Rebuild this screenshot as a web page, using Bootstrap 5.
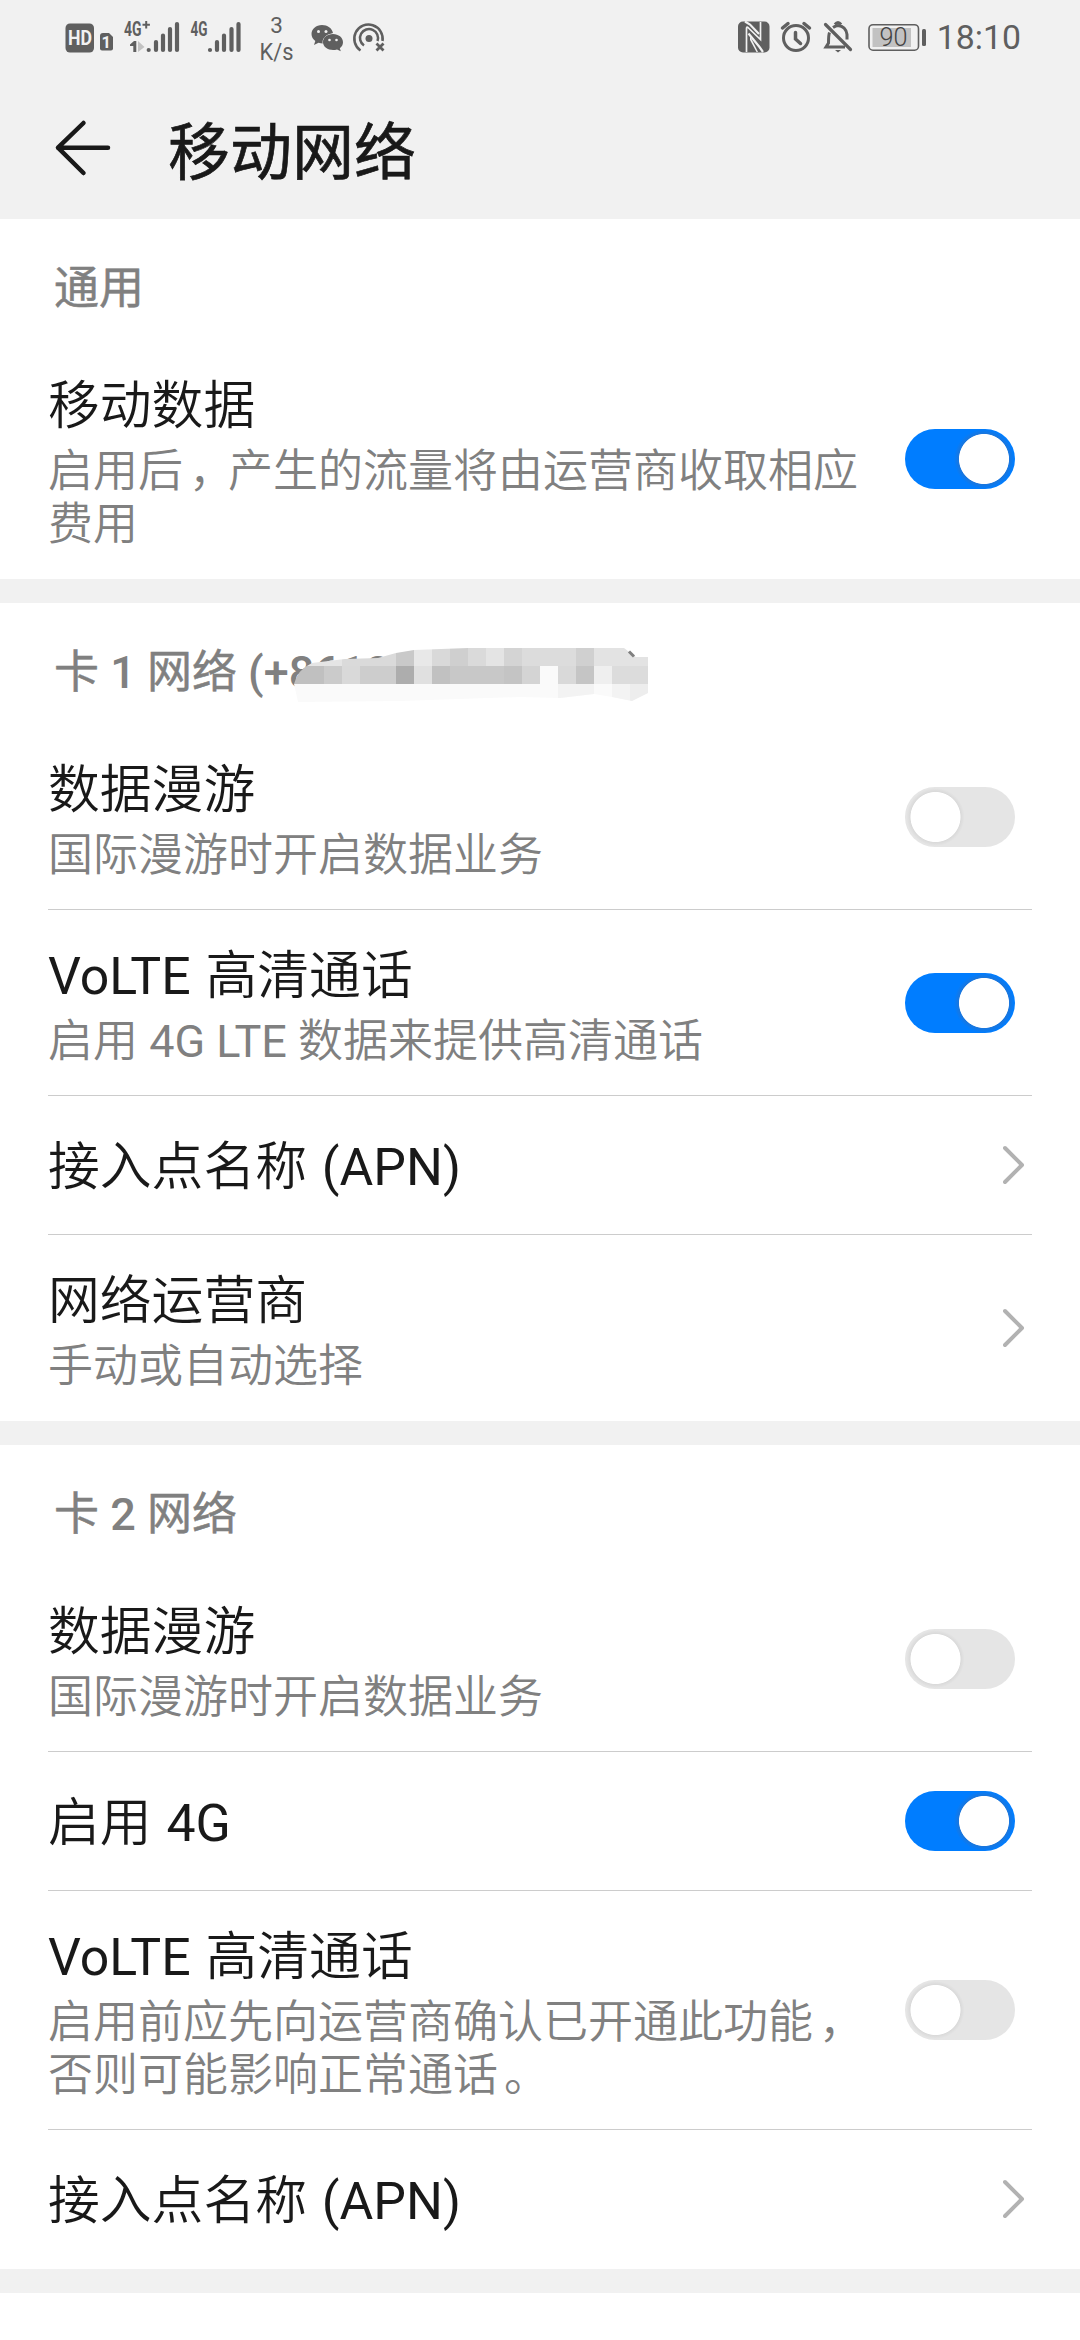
<!DOCTYPE html>
<html lang="zh-CN">
<head>
<meta charset="utf-8">
<meta name="viewport" content="width=device-width, initial-scale=1">
<title>移动网络</title>
<link href="https://cdn.jsdelivr.net/npm/bootstrap@5.3.0/dist/css/bootstrap.min.css" rel="stylesheet">
<style>
body{font-family:Roboto,"Noto Sans CJK SC DemiLight","Noto Sans CJK SC",sans-serif;background:#fff;color:#191919;overflow:hidden}
.statusbar{height:76px;padding:0 59px 0 64px;color:#5f5f5f}
.topbar{height:219px;background:#f1f1f1}
.titlebar{height:143px;padding-left:54px}
.page-title{font-family:"Noto Sans CJK SC",sans-serif;font-size:62px;line-height:80px;font-weight:400;-webkit-text-stroke:.7px #191919;margin:0 0 0 56px;padding-top:1px}
.band{height:24px;background:#f1f1f1}
.sec-head{height:121px;padding:43px 54px 0;font-family:Roboto,"Noto Sans CJK SC",sans-serif;font-size:45px;line-height:53px;font-weight:400;-webkit-text-stroke:.5px #808080;color:#808080}
.sec-head b{font-weight:500;-webkit-text-stroke:0}
.mosaic{left:288px;top:37px}
.rows{padding:0 48px}
.setting{border-bottom:1px solid #ccc;min-height:139px;padding-right:17px}
.setting.nav-row{padding-right:7px}
.setting:last-child{border-color:transparent}
.two{padding:36px 0 27px}
.one{padding-top:5px}
.t-main{font-size:51.8px;line-height:61px;word-spacing:2px}
.t-sub{font-size:45px;line-height:53px;margin-top:8px;color:#808080;width:830px}
.punct{padding-left:6px;margin-right:-6px}
.form-switch.sw{padding:0;min-height:0;margin:0}
.form-switch.sw .form-check-input{width:110px;height:60px;margin:0;border:0;background-color:#e5e5e5;float:none;border-radius:30px;display:block;background-size:auto;background-position:0 0;
background-image:radial-gradient(circle at 30.5px 30px,#fff 24.6px,#dadada 25.4px,#e5e5e500 29px)}
.form-switch.sw .form-check-input:checked{background-color:#007dff;
background-image:radial-gradient(circle at 79px 30px,#fff 24.6px,#1a76dd 25.4px,#1a76dd00 30px)}
.clock{font-size:33.8px;line-height:40px;margin-left:6px}
</style>
</head>
<body>
<header class="topbar">
<div class="statusbar d-flex align-items-center justify-content-between">
<div class="d-flex align-items-center">
<svg width="330" height="76" viewBox="64 0 330 76" fill="#5f5f5f" font-family="Roboto">
<rect x="65.500" y="23.500" width="28.500" height="29" rx="4.500"/>
<text x="68" y="45" font-size="19.500" font-weight="700" fill="#f1f1f1" textLength="24" lengthAdjust="spacingAndGlyphs">HD</text>
<path d="M103 33h6l4 4v11.500q0 2-2 2h-9q-2 0-2-2V36q0-3 3-3z"/>
<text x="101.500" y="48" font-size="16.500" font-weight="700" fill="#f1f1f1">1</text>
<text x="124" y="35.500" font-size="20" font-weight="700" textLength="17.500" lengthAdjust="spacingAndGlyphs">4G</text>
<path d="M142.500 23.700h2.700v-2.700h2v2.700h2.700v2h-2.700v2.700h-2v-2.700h-2.700z"/>
<path d="M130 44.500l4-3.500h2.300V52h-3V46h-3.300z"/><path d="M138 41v11l6.500-5z" fill="#c2c2c2"/>
<g stroke="#5f5f5f" stroke-width="4.200" stroke-linecap="round"><path d="M148.700 50v0M156 42v8M163 35.500V50M170 29v21M177 24v26"/><path d="M210 50v0M217 42v8M224 35.500V50M231.500 29v21M238.500 24v26"/></g>
<text x="190.500" y="35.500" font-size="20" font-weight="700" textLength="17" lengthAdjust="spacingAndGlyphs">4G</text>
<text x="276.500" y="32.500" font-size="22.500" text-anchor="middle">3</text>
<text x="276.500" y="60" font-size="23" text-anchor="middle" textLength="34" lengthAdjust="spacingAndGlyphs">K/s</text>
<path d="M322 25c-6 0-10.500 4-10.500 9 0 3 1.500 5.300 3.800 7l-1.300 4 4.500-2.300q4 1.200 7.500.3A9.500 9.500 0 0 1 333 33C332 28 327.500 25 322 25z"/>
<path d="M333 34c5.500 0 10 3.600 10 8.200 0 2.500-1.300 4.600-3.200 6l1 3-3.800-1.800c-7 2-14-1.700-14-7.200 0-4.600 4.500-8.200 10-8.200z" stroke="#f1f1f1" stroke-width="1" paint-order="stroke"/>
<g fill="#f1f1f1"><circle cx="318.500" cy="31.500" r="1.500"/><circle cx="326" cy="31.500" r="1.500"/><circle cx="329.500" cy="40" r="1.300"/><circle cx="336.500" cy="40" r="1.300"/></g>
<g fill="none" stroke="#5f5f5f" stroke-width="2.500"><path d="M360.500 50.500A14.200 14.200 0 1 1 382.500 41"/><path d="M364 45.500A9 9 0 1 1 377.500 41"/><path d="M376.500 43.500l7 7M383.500 43.500l-7 7" stroke-width="2.800"/></g><circle cx="369" cy="38.500" r="3.500"/>
</svg>
</div>
<div class="d-flex align-items-center">
<svg width="196" height="76" viewBox="735 0 196 76" fill="none" stroke="#5f5f5f" stroke-width="3">
<rect x="738" y="21.500" width="31.500" height="31" rx="5" fill="#5f5f5f" stroke="none"/>
<path d="M746.500 52V28.500q0-2.500 2-.5l12 11.500V22" stroke="#f1f1f1" stroke-width="1.700"/><path d="M745 21.500l5 3 9 9.500M748.500 33.500l11 13.500 3.500 5" stroke="#f1f1f1" stroke-width="2.200"/><path d="M750 36v16h8z" fill="#f1f1f1" stroke="none"/><path d="M749.500 39v13h7z" fill="#5f5f5f" stroke="none"/>
<circle cx="796" cy="38" r="12.500"/><path d="M795.500 32.500V39l5 4.500M782.500 28l5.500-4.500M809.500 28l-5.500-4.500" stroke-linecap="round" stroke-width="3.500"/>
<path d="M825.500 24.500l25 25" stroke-width="3.200" stroke-linecap="round"/><path d="M829.500 32.500Q828.500 35 828.500 43L826 47h19M833 27.500q3-2 5-2 8 1 9 9v5"/><path d="M835 24.500q3-4 6 0"/><path d="M835 50h6l-3 2.500z" fill="#5f5f5f" stroke="none"/>
<rect x="869" y="24.700" width="49.500" height="25.500" rx="4" stroke-width="1.600"/><rect x="872.500" y="28" width="38.500" height="19" fill="#c2c2c2" stroke="none"/><rect x="922" y="29" width="4" height="17" rx="1.500" fill="#5f5f5f" stroke="none"/>
<text x="879.500" y="45.800" font-size="25.500" font-family="Roboto" font-weight="300" fill="#444" stroke="none" textLength="28" lengthAdjust="spacingAndGlyphs">90</text>
</svg>
<span class="clock">18:10</span>
</div>
</div>
<div class="titlebar d-flex align-items-center">
<svg width="58" height="58" viewBox="54 118 58 58" fill="none" stroke="#191919" stroke-width="4.500" stroke-linecap="round" stroke-linejoin="round"><path d="M108 146.700H58M83.500 122L58 146.700 83.500 172"/></svg>
<h1 class="page-title">移动网络</h1>
</div>
</header>
<main>
<section>
<div class="sec-head">通用</div>
<div class="rows">
<div class="setting d-flex align-items-center justify-content-between"><div class="two"><div class="t-main">移动数据</div><div class="t-sub">启用后<span class="punct">，</span>产生的流量将由运营商收取相应费用</div></div><div class="form-check form-switch sw"><input class="form-check-input" type="checkbox" checked></div></div>
</div>
</section>
<div class="band"></div>
<section>
<div class="sec-head position-relative">卡 <b>1</b> 网络 <b>(+8618</b>
<svg class="mosaic position-absolute" width="364" height="70" viewBox="288 640 364 70" shape-rendering="crispEdges">
<clipPath id="smear"><path d="M294 684Q297 670 312 663L345 659 378 658 396 653 414 650 468 648H624L636 657H648V693L632 701 612 697 594 694 560 698 520 697 400 701 298 702z"/></clipPath>
<g clip-path="url(#smear)">
<path fill="#fafafa" d="M288 684h360v20H288z"/><path fill="#f3f3f3" d="M558 684h36v20h-36zM612 684h18v20h-18z"/><path fill="#ededed" d="M630 684h18v20h-18z"/>
<path fill="#e5e5e5" d="M288 646h54v20h-54z"/><path fill="#dadada" d="M342 646h54v20h-54z"/><path fill="#c9c9c9" d="M396 646h18v20h-18z"/><path fill="#e8e8e8" d="M414 646h18v20h-18z"/><path fill="#d9d9d9" d="M432 646h18v20h-18z"/><path fill="#cfcfcf" d="M450 646h18v20h-18z"/><path fill="#dadada" d="M468 646h18v20h-18z"/><path fill="#e4e4e4" d="M486 646h18v20h-18z"/><path fill="#d4d4d4" d="M504 646h18v20h-18z"/><path fill="#dcdcdc" d="M522 646h54v20h-54z"/><path fill="#d0d0d0" d="M576 646h18v20h-18z"/><path fill="#e3e3e3" d="M594 646h54v20h-54z"/>
<path fill="#c0c0c0" d="M288 666h36v18h-36z"/><path fill="#cbcbcb" d="M324 666h18v18h-18z"/><path fill="#d9d9d9" d="M342 666h18v18h-18z"/><path fill="#cdcdcd" d="M360 666h36v18h-36z"/><path fill="#adadad" d="M396 666h18v18h-18z"/><path fill="#e0e0e0" d="M414 666h18v18h-18z"/><path fill="#c1c1c1" d="M432 666h18v18h-18z"/><path fill="#c8c8c8" d="M450 666h54v18h-54z"/><path fill="#c4c4c4" d="M504 666h18v18h-18z"/><path fill="#d4d4d4" d="M522 666h18v18h-18z"/><path fill="#fafafa" d="M540 666h18v18h-18z"/><path fill="#d9d9d9" d="M558 666h18v18h-18z"/><path fill="#c5c5c5" d="M576 666h18v18h-18z"/><path fill="#efefef" d="M594 666h18v18h-18z"/><path fill="#dcdcdc" d="M612 666h36v18h-36z"/>
</g>
<path d="M629 651.500l5 5" stroke="#808080" stroke-width="3" shape-rendering="auto"/>
</svg>
</div>
<div class="rows">
<div class="setting d-flex align-items-center justify-content-between"><div class="two"><div class="t-main">数据漫游</div><div class="t-sub">国际漫游时开启数据业务</div></div><div class="form-check form-switch sw"><input class="form-check-input" type="checkbox"></div></div>
<div class="setting d-flex align-items-center justify-content-between"><div class="two"><div class="t-main">VoLTE 高清通话</div><div class="t-sub">启用 4G LTE 数据来提供高清通话</div></div><div class="form-check form-switch sw"><input class="form-check-input" type="checkbox" checked></div></div>
<div class="setting nav-row d-flex align-items-center justify-content-between"><div class="t-main one">接入点名称 (APN)</div><svg width="22" height="40" fill="none" stroke="#b2b2b2" stroke-width="4" stroke-linecap="round" stroke-linejoin="round"><path d="M2 3l17 17L2 37"/></svg></div>
<div class="setting nav-row d-flex align-items-center justify-content-between"><div class="two"><div class="t-main">网络运营商</div><div class="t-sub">手动或自动选择</div></div><svg width="22" height="40" fill="none" stroke="#b2b2b2" stroke-width="4" stroke-linecap="round" stroke-linejoin="round"><path d="M2 3l17 17L2 37"/></svg></div>
</div>
</section>
<div class="band"></div>
<section>
<div class="sec-head">卡 <b>2</b> 网络</div>
<div class="rows">
<div class="setting d-flex align-items-center justify-content-between"><div class="two"><div class="t-main">数据漫游</div><div class="t-sub">国际漫游时开启数据业务</div></div><div class="form-check form-switch sw"><input class="form-check-input" type="checkbox"></div></div>
<div class="setting d-flex align-items-center justify-content-between"><div class="t-main one">启用 4G</div><div class="form-check form-switch sw"><input class="form-check-input" type="checkbox" checked></div></div>
<div class="setting d-flex align-items-center justify-content-between"><div class="two"><div class="t-main">VoLTE 高清通话</div><div class="t-sub">启用前应先向运营商确认已开通此功能<span class="punct">，</span>否则可能影响正常通话<span class="punct">。</span></div></div><div class="form-check form-switch sw"><input class="form-check-input" type="checkbox"></div></div>
<div class="setting nav-row d-flex align-items-center justify-content-between"><div class="t-main one">接入点名称 (APN)</div><svg width="22" height="40" fill="none" stroke="#b2b2b2" stroke-width="4" stroke-linecap="round" stroke-linejoin="round"><path d="M2 3l17 17L2 37"/></svg></div>
</div>
</section>
<div class="band"></div>
</main>
<script src="https://cdn.jsdelivr.net/npm/bootstrap@5.3.0/dist/js/bootstrap.bundle.min.js"></script>
</body>
</html>
